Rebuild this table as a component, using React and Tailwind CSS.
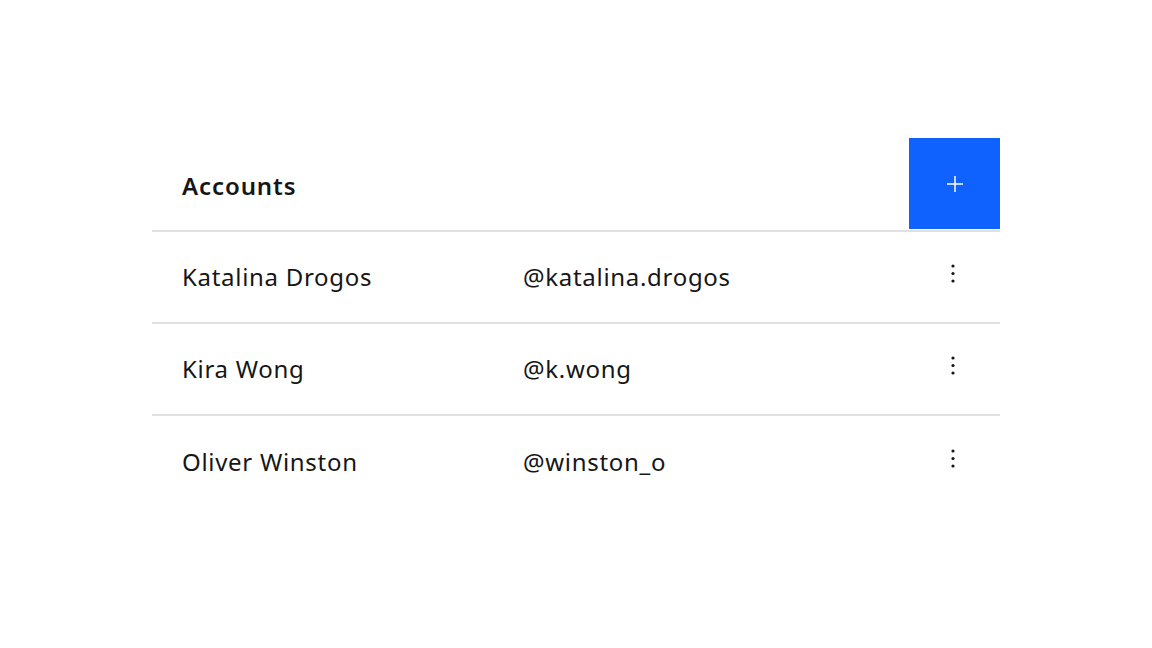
import React from "react";

const rows = [
  { name: "Katalina Drogos", handle: "@katalina.drogos" },
  { name: "Kira Wong", handle: "@k.wong" },
  { name: "Oliver Winston", handle: "@winston_o" },
];

function Kebab() {
  return (
    <svg width="24" height="24" viewBox="0 0 24 24" fill="#161616">
      <circle cx="12" cy="5" r="1.6" />
      <circle cx="12" cy="12.5" r="1.6" />
      <circle cx="12" cy="20" r="1.6" />
    </svg>
  );
}

export default function App() {
  return (
    <div
      className="w-[1152px] h-[648px] bg-white pt-[138px] pl-[152px]"
      style={{ fontFamily: '"Noto Sans", "Open Sans", sans-serif' }}
    >
      <div className="w-[848px] text-[#161616]">
        <div className="flex h-[94px] items-start border-b-2 border-[#e0e0e0]">
          <div className="flex-1 pl-[30px] pt-[30px] text-[24px] font-semibold tracking-[0.9px]">Accounts</div>
          <button className="w-[91px] h-[91px] bg-[#0f62fe] flex items-center justify-center">
            <svg width="16" height="16" viewBox="0 0 16 16" stroke="white" strokeWidth="1.5">
              <line x1="8" y1="0" x2="8" y2="16" />
              <line x1="0" y1="8" x2="16" y2="8" />
            </svg>
          </button>
        </div>
        {rows.map((r, i) => (
          <div
            key={r.name}
            className={`flex h-[92px] items-center ${i < rows.length - 1 ? "border-b-2 border-[#e0e0e0]" : ""}`}
          >
            <div className="w-[371px] pl-[30px] text-[24px] tracking-[0.7px]">{r.name}</div>
            <div className="flex-1 text-[24px] tracking-[0.7px]">{r.handle}</div>
            <div className="w-[94px] flex justify-center -mt-[9px]">
              <Kebab />
            </div>
          </div>
        ))}
      </div>
    </div>
  );
}
